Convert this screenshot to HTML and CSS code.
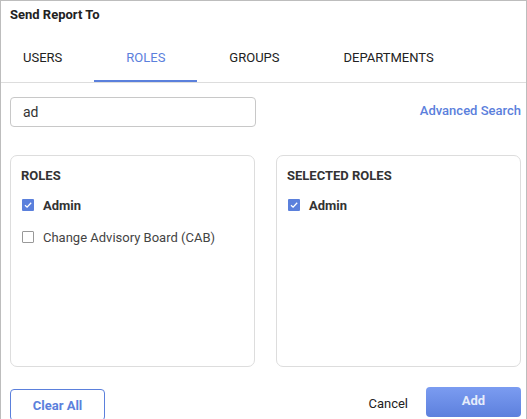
FILE: index.html
```html
<!DOCTYPE html>
<html lang="en">
<head>
    <meta charset="UTF-8">
    <title>Send Report To</title>
    <link rel="stylesheet" href="styles.css">
</head>
<body>
    <div class="dialog">
        <div class="title">Send Report To</div>

        <div class="tabs">
            <div class="tab-list">
                <div class="tab">USERS</div>
                <div class="tab active">ROLES</div>
                <div class="tab">GROUPS</div>
                <div class="tab">DEPARTMENTS</div>
            </div>
        </div>

        <div class="search-row">
            <input type="text" class="search" value="ad">
            <a class="advanced" href="#">Advanced Search</a>
        </div>

        <div class="panels">
            <div class="panel">
                <div class="panel-title">ROLES</div>
                <div class="item checked">
                    <span class="box">
                        <svg width="12" height="12" viewBox="0 0 12 12"><path d="M3 6.2 L5.1 8.2 L9.2 3.8" fill="none" stroke="#fff" stroke-width="1.3"/></svg>
                    </span>
                    <span class="label">Admin</span>
                </div>
                <div class="item">
                    <span class="box"></span>
                    <span class="label">Change Advisory Board (CAB)</span>
                </div>
            </div>
            <div class="panel">
                <div class="panel-title">SELECTED ROLES</div>
                <div class="item checked">
                    <span class="box">
                        <svg width="12" height="12" viewBox="0 0 12 12"><path d="M3 6.2 L5.1 8.2 L9.2 3.8" fill="none" stroke="#fff" stroke-width="1.3"/></svg>
                    </span>
                    <span class="label">Admin</span>
                </div>
            </div>
        </div>

        <div class="footer">
            <button class="btn-clear">Clear All</button>
            <div class="actions">
                <button class="btn-cancel">Cancel</button>
                <button class="btn-add">Add</button>
            </div>
        </div>
    </div>
</body>
</html>
```

FILE: styles.css
```css
* {
    box-sizing: border-box;
}
body {
    margin: 0;
    font-family: Roboto, "Liberation Sans", sans-serif;
    color: #333;
    background: #fff;
}
.dialog {
    width: 527px;
    height: 419px;
    border: 1px solid #bdbdbd;
    border-bottom: none;
    overflow: hidden;
}
.title {
    padding: 6px 9px 0;
    height: 35px;
    font-size: 13px;
    font-weight: bold;
    color: #222;
}
.tabs {
    border-bottom: 1px solid #ddd;
    overflow: hidden;
}
.tab-list {
    display: flex;
    margin-left: -10px;
}
.tab {
    padding: 0 32px;
    height: 46px;
    line-height: 44px;
    font-size: 13px;
    font-weight: 400;
    color: #222;
    border-bottom: 2px solid transparent;
}
.tab.active {
    color: #5b80dc;
    border-bottom-color: #5b80dc;
}
.search-row {
    display: flex;
    justify-content: space-between;
    align-items: center;
    padding: 14px 5px 0 9px;
}
.search {
    width: 246px;
    height: 30px;
    border: 1px solid #c8c8c8;
    border-radius: 4px;
    padding: 0 12px;
    font-family: inherit;
    font-size: 14px;
    color: #333;
    outline: none;
}
.advanced {
    font-size: 13px;
    font-weight: 500;
    color: #5b80dc;
    text-decoration: none;
    margin-top: -3px;
}
.panels {
    display: flex;
    gap: 21px;
    padding: 28px 5px 0 9px;
}
.panel {
    width: 246px;
    height: 212px;
    border: 1px solid #ddd;
    border-radius: 7px;
    padding: 12px 10px;
}
.panel-title {
    font-size: 13px;
    font-weight: bold;
    color: #333;
    margin-bottom: 6px;
}
.item {
    display: flex;
    align-items: center;
    height: 32px;
    font-size: 13px;
}
.box {
    width: 12px;
    height: 12px;
    margin: 0 9px 0 1px;
    border: 1px solid #999;
    border-radius: 1px;
    background: #fff;
    display: flex;
}
.item.checked .box {
    border: none;
    background: #5b80dc;
}
.label {
    color: #444;
}
.item.checked .label {
    font-weight: bold;
    color: #333;
}
.footer {
    display: flex;
    justify-content: space-between;
    align-items: flex-start;
    padding: 20px 5px 0 9px;
}
.btn-clear {
    margin-top: 2px;
    width: 95px;
    height: 32px;
    border: 1px solid #5b80dc;
    border-radius: 4px;
    background: #fff;
    color: #5b80dc;
    font-family: inherit;
    font-size: 13px;
    font-weight: bold;
}
.actions {
    display: flex;
    align-items: center;
}
.btn-cancel {
    border: none;
    background: none;
    font-family: inherit;
    font-size: 13px;
    color: #222;
    margin-top: 3px;
    margin-right: 12px;
}
.btn-add {
    width: 95px;
    height: 30px;
    border: none;
    border-radius: 4px;
    background: linear-gradient(#7b9cf1, #5d80dd);
    color: #e6ecfb;
    font-family: inherit;
    font-size: 13px;
    font-weight: bold;
    padding-bottom: 5px;
}
```
